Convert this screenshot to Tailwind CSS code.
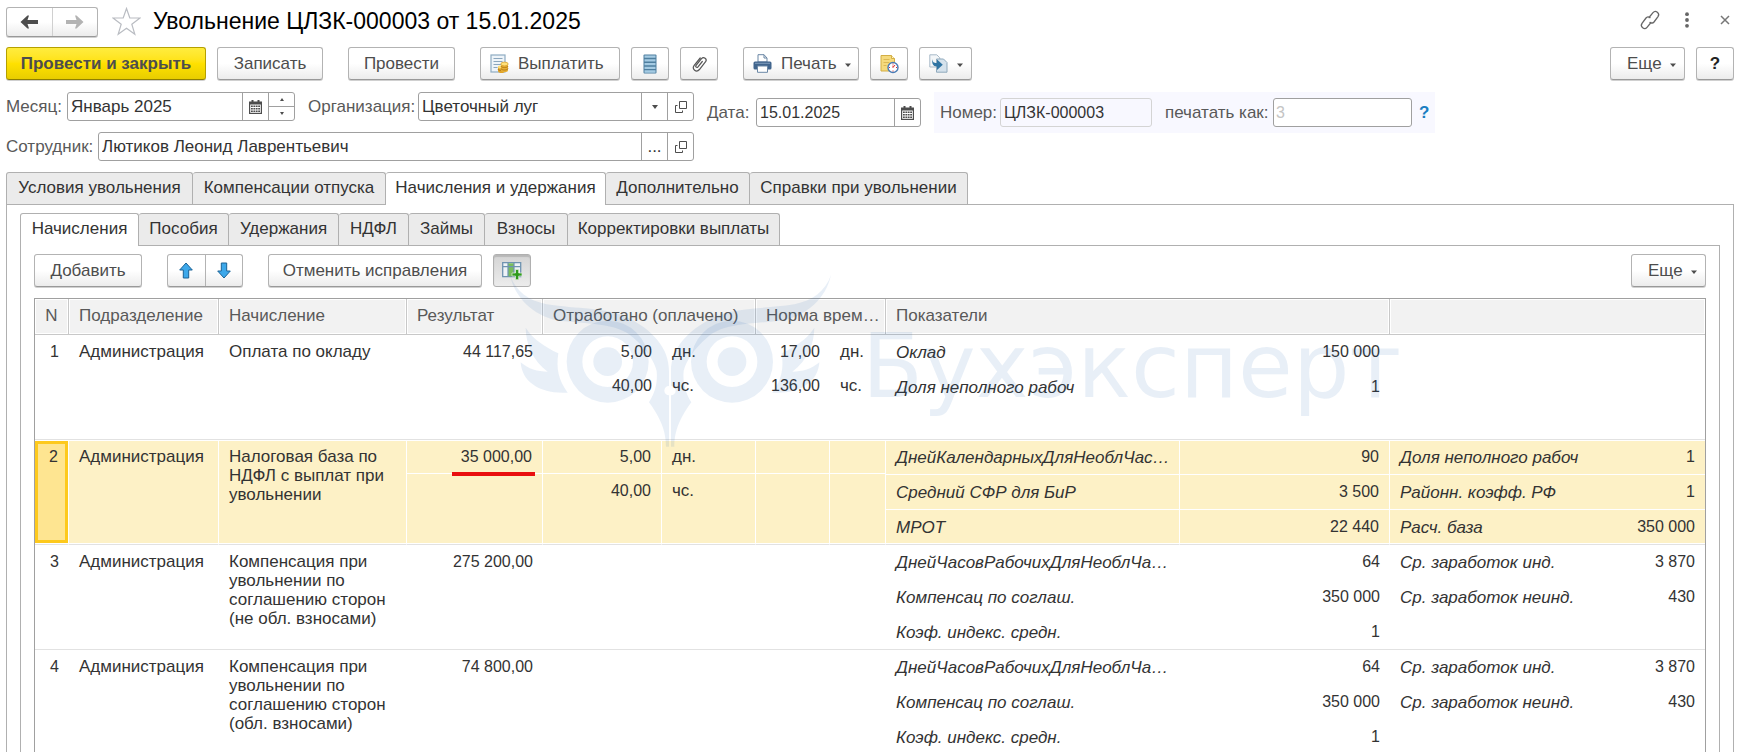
<!DOCTYPE html>
<html lang="ru">
<head>
  <meta charset="UTF-8" />
  <meta name="viewport" content="width=device-width, initial-scale=1.0"/>
  <title>Увольнение ЦЛЗК-000003 от 15.01.2025</title>
  <!-- Tailwind CSS -->
  <script src="https://cdn.jsdelivr.net/npm/@tailwindcss/browser@4"></script>
</head>
<body class="bg-white font-['Liberation_Sans',Arial,sans-serif] text-[17px] leading-[19px] text-[#333]">
<div class="relative flex h-screen flex-col overflow-hidden pl-[6px] pt-[6px]">

  <!-- Заголовок -->
  <header class="flex h-[31px] shrink-0 items-center pr-[6px]">
    <div class="flex h-[30px] w-[92px] rounded-[3px] border border-[#b3b3b3] border-b-[#999] bg-linear-to-b from-white from-50% to-[#ececec] shadow-[0_1px_0_#d0d0d0]">
      <button type="button" aria-label="Назад" class="flex flex-1 items-center justify-center border-r border-[#d0d0d0]">
        <svg width="18" height="14" viewBox="0 0 18 14"><path d="M7.500 0.500 0.500 7l7 6.500h1.500L7.500 9H18V5H7.500L9 .5z" fill="#4d4d4d"/></svg>
      </button>
      <button type="button" aria-label="Вперед" class="flex flex-1 items-center justify-center">
        <svg width="18" height="14" viewBox="0 0 18 14"><path d="M10.500 0.500 17.500 7l-7 6.500H9L10.500 9H0V5h10.500L9 .5z" fill="#b3b3b3"/></svg>
      </button>
    </div>
    <button type="button" aria-label="В избранное" class="ml-[14px]">
      <svg width="29" height="29" viewBox="0 0 29 29" fill="none" stroke="#b9bcc2" stroke-width="1.200"><path d="M14.500 1.500 17.800 11H28l-8.200 6.200 3 10L14.500 21.200 6.200 27.200l3-10L1 11h10.200z"/></svg>
    </button>
    <h1 class="ml-[12px] pb-[2px] text-[23px] leading-[28px] text-black">Увольнение ЦЛЗК-000003 от 15.01.2025</h1>
    <div class="ml-auto flex items-center pb-[3px]">
      <button type="button" aria-label="Ссылка">
        <svg width="22" height="22" viewBox="0 0 22 22" fill="none" stroke="#666" stroke-width="1.300" stroke-linecap="round"><path d="M10 8.500 14 3.700c2.600-3 7.300.5 5 3.900l-4 5.400c-1.100 1.400-2.900 1.400-4 .4M12 13.500l-4 4.800c-2.600 3-7.300-.5-5-3.900L7 9c1.100-1.400 2.900-1.400 4-.4"/></svg>
      </button>
      <button type="button" aria-label="Меню" class="ml-[23px]">
        <svg width="6" height="16" viewBox="0 0 6 16" fill="#666"><circle cx="3" cy="2.200" r="1.900"/><circle cx="3" cy="8" r="1.900"/><circle cx="3" cy="13.800" r="1.900"/></svg>
      </button>
      <button type="button" aria-label="Закрыть" class="ml-[30px] mr-[3px]">
        <svg width="10" height="10" viewBox="0 0 10 10" stroke="#777" stroke-width="1.500"><path d="M1 1l8 8M9 1 1 9"/></svg>
      </button>
    </div>
  </header>

  <!-- Командная панель -->
  <div class="mt-[10px] flex h-[33px] shrink-0 pr-[5px] text-[#4d4d4d]">
    <button type="button" class="w-[200px] rounded-[3px] border border-[#b5a000] border-b-[#8f7e00] bg-linear-to-b from-[#ffec3d] via-[#ffe100] to-[#e8cd00] font-bold shadow-[0_1px_0_#cfcfcf]">Провести и закрыть</button>
    <button type="button" class="ml-[11px] w-[106px] rounded-[3px] border border-[#b3b3b3] border-b-[#999] bg-linear-to-b from-white from-50% to-[#ececec] shadow-[0_1px_0_#d0d0d0]">Записать</button>
    <button type="button" class="ml-[25px] w-[107px] rounded-[3px] border border-[#b3b3b3] border-b-[#999] bg-linear-to-b from-white from-50% to-[#ececec] shadow-[0_1px_0_#d0d0d0]">Провести</button>
    <button type="button" class="ml-[25px] flex w-[140px] items-center gap-[9px] rounded-[3px] border border-[#b3b3b3] border-b-[#999] bg-linear-to-b from-white from-50% to-[#ececec] pl-[9px] shadow-[0_1px_0_#d0d0d0]">
      <svg width="19" height="20" viewBox="0 0 19 20"><rect x="1" y="1" width="14" height="17" fill="#eef4f9" stroke="#8eabc2" stroke-width="1.200"/><path d="M3.500 4.500h9M3.500 7.500h9M3.500 10.500h9M3.500 13.500h4" stroke="#8ba6bd"/><path d="M8 12.500v4.500c0 2.800 7 2.800 7 0v-4.500z" fill="#e0a32a"/><path d="M8 15c0 2 7 2 7 0" stroke="#b47a18" fill="none"/><ellipse cx="11.500" cy="13" rx="3.500" ry="1.700" fill="#ffe07a"/><path d="M11 10v6.500c0 2 7 2 7 0V10z" fill="#e8b035"/><path d="M11 12c0 2 7 2 7 0M11 14.500c0 2 7 2 7 0" stroke="#b47a18" fill="none"/><ellipse cx="14.500" cy="10" rx="3.700" ry="1.900" fill="#ffe07a" stroke="#d29b27" stroke-width=".7"/></svg>
      Выплатить
    </button>
    <button type="button" aria-label="Реестр" class="ml-[11px] flex w-[38px] items-center justify-center rounded-[3px] border border-[#b3b3b3] border-b-[#999] bg-linear-to-b from-white from-50% to-[#ececec] shadow-[0_1px_0_#d0d0d0]">
      <svg width="14" height="20" viewBox="0 0 14 20"><rect x=".5" y=".5" width="13" height="19" rx="1" fill="#4f7f9f"/><path d="M1.500 2.700h11M1.500 6.400h11M1.500 10.100h11M1.500 13.800h11M1.500 17.500h11" stroke="#a5cbe3" stroke-width="2.300"/></svg>
    </button>
    <button type="button" aria-label="Файлы" class="ml-[11px] flex w-[38px] items-center justify-center rounded-[3px] border border-[#b3b3b3] border-b-[#999] bg-linear-to-b from-white from-50% to-[#ececec] shadow-[0_1px_0_#d0d0d0]">
      <svg width="18" height="18" viewBox="0 0 18 18" fill="none" stroke="#555" stroke-width="1.200" stroke-linecap="round"><path d="M12.300 6.500 8 11.800c-1.200 1.400-3 0-1.900-1.500l5.400-6.600c2.200-2.600 6 .3 4.100 3L9.400 14.500c-3 3.600-8-.2-5.200-4.200l6-7.300"/></svg>
    </button>
    <button type="button" class="ml-[25px] flex w-[116px] items-center rounded-[3px] border border-[#b3b3b3] border-b-[#999] bg-linear-to-b from-white from-50% to-[#ececec] pl-[9px] shadow-[0_1px_0_#d0d0d0]">
      <svg width="19" height="19" viewBox="0 0 19 19"><path d="M5 8V.7h6L14 4v4z" fill="#fff" stroke="#6b87a5"/><path d="M11 .7V4h3" fill="none" stroke="#6b87a5"/><rect x=".5" y="7.500" width="18" height="8" rx="1.500" fill="#41658d"/><path d="M2 9.300h15" stroke="#7f9dbd"/><path d="M4.500 12h10v6.300h-10z" fill="#fff" stroke="#6b87a5"/></svg>
      <span class="ml-[9px]">Печать</span>
      <svg class="ml-[8px] mt-[2px]" width="6" height="4" viewBox="0 0 6 4"><path d="M0 .5h6L3 4z" fill="#4d4d4d"/></svg>
    </button>
    <button type="button" aria-label="Задачи" class="ml-[11px] flex w-[38px] items-center justify-center rounded-[3px] border border-[#b3b3b3] border-b-[#999] bg-linear-to-b from-white from-50% to-[#ececec] shadow-[0_1px_0_#d0d0d0]">
      <svg width="19" height="20" viewBox="0 0 19 20"><path d="M1 1.500h10.500l3 3V17H1z" fill="#f5da7d" stroke="#d3ae45"/><path d="M11.500 1.500v3h3" fill="#fff3c4" stroke="#d3ae45"/><path d="M3.500 5.500h6M3.500 8.500h6M3.500 11.500h3" stroke="#dcb954"/><circle cx="13" cy="13.500" r="5" fill="#fff" stroke="#4a7cb5" stroke-width="1.400"/><path d="M13 9.500v1M13 16.500v1M9 13.500h1M16 13.500h1" stroke="#c33"/><path d="M13 13.500 15 11M13 13.500v-2" stroke="#d33"/></svg>
    </button>
    <button type="button" aria-label="Создать на основании" class="ml-[11px] flex w-[53px] items-center rounded-[3px] border border-[#b3b3b3] border-b-[#999] bg-linear-to-b from-white from-50% to-[#ececec] pl-[9px] shadow-[0_1px_0_#d0d0d0]">
      <svg width="19" height="19" viewBox="0 0 19 19"><path d="M.8.800h7l3 3V13H.800z" fill="#f3f6f8" stroke="#a9bac8"/><path d="M7.500 5h7l3.500 3.500v9.700H7.500z" fill="#d5e2ec" stroke="#8fa9bc"/><path d="M3.500 5c0 3 1 4 4.500 4V5.500l5.800 5.300L8 16v-3.500C4 12.500 2.500 9 3.500 5z" fill="#2f74a3"/></svg>
      <svg class="ml-[9px] mt-[2px]" width="6" height="4" viewBox="0 0 6 4"><path d="M0 .5h6L3 4z" fill="#4d4d4d"/></svg>
    </button>
    <button type="button" class="ml-auto flex w-[75px] items-center rounded-[3px] border border-[#b3b3b3] border-b-[#999] bg-linear-to-b from-white from-50% to-[#ececec] pl-[16px] shadow-[0_1px_0_#d0d0d0]">
      Еще
      <svg class="ml-[8px] mt-[2px]" width="6" height="4" viewBox="0 0 6 4"><path d="M0 .5h6L3 4z" fill="#4d4d4d"/></svg>
    </button>
    <button type="button" class="ml-[11px] w-[38px] rounded-[3px] border border-[#b3b3b3] border-b-[#999] bg-linear-to-b from-white from-50% to-[#ececec] font-bold text-[#222] shadow-[0_1px_0_#d0d0d0]">?</button>
  </div>

  <!-- Реквизиты документа -->
  <form class="mt-[12px] flex shrink-0">
    <div class="flex flex-col gap-[11px]">
      <div class="flex items-center">
        <label for="month" class="w-[61px] text-[#595959]">Месяц:</label>
        <div class="flex h-[29px] w-[228px] rounded-[3px] border border-[#a0a0a0]">
          <input id="month" type="text" value="Январь 2025" class="w-0 flex-1 px-[3px] outline-none">
          <button type="button" aria-label="Календарь" class="flex w-[26px] items-center justify-center border-l border-[#a0a0a0]">
            <svg width="13" height="14" viewBox="0 0 13 14"><path d="M2.500 0h2v1.500h4V0h2v1.500H13V14H0V1.500h2.500z" fill="#4d4d4d"/><path d="M1.200 4.500h10.600v8.300H1.200z" fill="#fff"/><path d="M2 6.300h9M2 8.800h9M2 11.300h9" stroke="#4d4d4d" stroke-width="1.500" stroke-dasharray="1.800 0.600"/></svg>
          </button>
          <div class="flex w-[26px] flex-col border-l border-[#a0a0a0]">
            <button type="button" aria-label="Больше" class="flex flex-1 items-center justify-center border-b border-[#a0a0a0]"><svg width="4" height="3" viewBox="0 0 4 3"><path d="M0 3h4L2 0z" fill="#4d4d4d"/></svg></button>
            <button type="button" aria-label="Меньше" class="flex flex-1 items-center justify-center"><svg width="4" height="3" viewBox="0 0 4 3"><path d="M0 0h4L2 3z" fill="#4d4d4d"/></svg></button>
          </div>
        </div>
        <label for="org" class="ml-[13px] w-[110px] text-[#595959]">Организация:</label>
        <div class="flex h-[29px] w-[276px] rounded-[3px] border border-[#a0a0a0]">
          <input id="org" type="text" value="Цветочный луг" class="w-0 flex-1 px-[3px] outline-none">
          <button type="button" aria-label="Выбрать" class="flex w-[26px] items-center justify-center border-l border-[#a0a0a0]"><svg width="6" height="4" viewBox="0 0 6 4"><path d="M0 0h6L3 4z" fill="#4d4d4d"/></svg></button>
          <button type="button" aria-label="Открыть" class="flex w-[26px] items-center justify-center border-l border-[#a0a0a0]"><svg width="12" height="12" viewBox="0 0 12 12" fill="none" stroke="#4d4d4d"><path d="M4.500.5h7v7h-7z"/><path d="M2.500 4.500h-2v7h7v-2"/></svg></button>
        </div>
      </div>
      <div class="flex items-center">
        <label for="employee" class="w-[92px] text-[#595959]">Сотрудник:</label>
        <div class="flex h-[29px] flex-1 rounded-[3px] border border-[#a0a0a0]">
          <input id="employee" type="text" value="Лютиков Леонид Лаврентьевич" class="w-0 flex-1 px-[3px] outline-none">
          <button type="button" aria-label="Выбрать" class="w-[26px] border-l border-[#a0a0a0]">...</button>
          <button type="button" aria-label="Открыть" class="flex w-[26px] items-center justify-center border-l border-[#a0a0a0]"><svg width="12" height="12" viewBox="0 0 12 12" fill="none" stroke="#4d4d4d"><path d="M4.500.5h7v7h-7z"/><path d="M2.500 4.500h-2v7h7v-2"/></svg></button>
        </div>
      </div>
    </div>
    <div class="ml-[13px] flex h-[41px] items-center">
      <label for="date" class="w-[49px] text-[#595959]">Дата:</label>
      <div class="flex h-[29px] w-[165px] rounded-[3px] border border-[#a0a0a0]">
        <input id="date" type="text" value="15.01.2025" class="w-0 flex-1 px-[3px] text-[16px] outline-none">
        <button type="button" aria-label="Календарь" class="flex w-[26px] items-center justify-center border-l border-[#a0a0a0]">
          <svg width="13" height="14" viewBox="0 0 13 14"><path d="M2.500 0h2v1.500h4V0h2v1.500H13V14H0V1.500h2.500z" fill="#4d4d4d"/><path d="M1.200 4.500h10.600v8.300H1.200z" fill="#fff"/><path d="M2 6.300h9M2 8.800h9M2 11.300h9" stroke="#4d4d4d" stroke-width="1.500" stroke-dasharray="1.800 0.600"/></svg>
        </button>
      </div>
    </div>
    <div class="ml-[13px] flex h-[41px] w-[501px] items-center bg-[#f8f8ff] pl-[6px]">
      <label for="number" class="w-[60px] text-[#595959]">Номер:</label>
      <input id="number" type="text" value="ЦЛЗК-000003" readonly class="h-[29px] w-[152px] rounded-[3px] border border-[#d4d4d4] px-[3px] text-[16px] outline-none">
      <label for="printas" class="ml-[13px] w-[108px] whitespace-nowrap text-[#595959]">печатать как:</label>
      <input id="printas" type="text" placeholder="3" class="h-[29px] w-[139px] rounded-[3px] border border-[#a0a0a0] bg-white px-[2px] text-[16px] outline-none placeholder:text-[#c4c4c4]">
      <a href="#" class="ml-[7px] font-bold text-[#1a7ec2]">?</a>
    </div>
  </form>

  <!-- Закладки -->
  <div class="mt-[11px] flex h-[33px] shrink-0">
    <button type="button" class="h-[32px] w-[187px] rounded-t-[3px] border border-b-0 border-[#b0b0b0] bg-[#ebebeb] pb-[2px]">Условия увольнения</button>
    <button type="button" class="h-[32px] w-[193px] rounded-t-[3px] border-t border-r border-[#b0b0b0] bg-[#ebebeb] pb-[2px]">Компенсации отпуска</button>
    <button type="button" class="z-10 h-[33px] w-[220px] rounded-t-[3px] border-t border-r border-[#b0b0b0] bg-white pb-[3px]">Начисления и удержания</button>
    <button type="button" class="h-[32px] w-[144px] rounded-t-[3px] border-t border-r border-[#b0b0b0] bg-[#ebebeb] pb-[2px]">Дополнительно</button>
    <button type="button" class="h-[32px] w-[218px] rounded-t-[3px] border-t border-r border-[#b0b0b0] bg-[#ebebeb] pb-[2px]">Справки при увольнении</button>
  </div>
  <div class="mr-[5px] -mt-px flex-1 border border-b-0 border-[#b0b0b0] px-[13px] pt-[8px]">
    <div class="flex h-[33px]">
      <button type="button" class="z-10 h-[33px] w-[119px] rounded-t-[3px] border border-b-0 border-[#b0b0b0] bg-white pb-[3px]">Начисления</button>
      <button type="button" class="h-[32px] w-[90px] rounded-t-[3px] border-t border-r border-[#b0b0b0] bg-[#ebebeb] pb-[2px]">Пособия</button>
      <button type="button" class="h-[32px] w-[110px] rounded-t-[3px] border-t border-r border-[#b0b0b0] bg-[#ebebeb] pb-[2px]">Удержания</button>
      <button type="button" class="h-[32px] w-[70px] rounded-t-[3px] border-t border-r border-[#b0b0b0] bg-[#ebebeb] pb-[2px]">НДФЛ</button>
      <button type="button" class="h-[32px] w-[76px] rounded-t-[3px] border-t border-r border-[#b0b0b0] bg-[#ebebeb] pb-[2px]">Займы</button>
      <button type="button" class="h-[32px] w-[83px] rounded-t-[3px] border-t border-r border-[#b0b0b0] bg-[#ebebeb] pb-[2px]">Взносы</button>
      <button type="button" class="h-[32px] w-[212px] rounded-t-[3px] border-t border-r border-[#b0b0b0] bg-[#ebebeb] pb-[2px]">Корректировки выплаты</button>
    </div>
    <div class="-mt-px border border-b-0 border-[#b0b0b0] px-[13px] pt-[8px]">
      <div class="flex h-[33px] text-[#4d4d4d]">
        <button type="button" class="w-[108px] rounded-[3px] border border-[#b3b3b3] border-b-[#999] bg-linear-to-b from-white from-50% to-[#ececec] shadow-[0_1px_0_#d0d0d0]">Добавить</button>
        <div class="ml-[25px] flex w-[76px] rounded-[3px] border border-[#b3b3b3] border-b-[#999] bg-linear-to-b from-white from-50% to-[#ececec] shadow-[0_1px_0_#d0d0d0]">
          <button type="button" aria-label="Вверх" class="flex flex-1 items-center justify-center border-r border-[#b3b3b3]"><svg width="14" height="17" viewBox="0 0 14 17"><path d="M7 1 13.300 8H9.700v8H4.300V8H.7z" fill="#3da8ea" stroke="#1a6296"/></svg></button>
          <button type="button" aria-label="Вниз" class="flex flex-1 items-center justify-center"><svg width="14" height="17" viewBox="0 0 14 17"><path d="M7 16 13.300 9H9.700V1H4.300v8H.7z" fill="#3da8ea" stroke="#1a6296"/></svg></button>
        </div>
        <button type="button" class="ml-[25px] w-[214px] rounded-[3px] border border-[#b3b3b3] border-b-[#999] bg-linear-to-b from-white from-50% to-[#ececec] shadow-[0_1px_0_#d0d0d0]">Отменить исправления</button>
        <button type="button" aria-label="Показать колонки" class="ml-[11px] flex w-[38px] items-center justify-center rounded-[3px] border border-[#b0b0b0] bg-linear-to-b from-[#d4d4d4] to-[#ececec] shadow-[inset_0_2px_1px_#b8b8b8]">
          <svg width="20" height="19" viewBox="0 0 20 19"><path d="M.7 1.700h18v14H.7z" fill="#eef3f7" stroke="#6f93b0" stroke-width="1.300"/><path d="M6 2.300h6v13H6z" fill="#79bd5c"/><path d="M1 5.700h17.500M6 2v13.500M12 2v13.500" stroke="#6f93b0" stroke-width="1.200"/><path d="M13.500 8.500h3.200V12H20v3h-3.300v3.700h-3.200V15H10v-3h3.500z" fill="#2f9a1d" stroke="#e6f2e0" stroke-width=".7"/></svg>
        </button>
        <button type="button" class="ml-auto flex w-[75px] items-center rounded-[3px] border border-[#b3b3b3] border-b-[#999] bg-linear-to-b from-white from-50% to-[#ececec] pl-[16px] shadow-[0_1px_0_#d0d0d0]">
          Еще
          <svg class="ml-[8px] mt-[2px]" width="6" height="4" viewBox="0 0 6 4"><path d="M0 .5h6L3 4z" fill="#4d4d4d"/></svg>
        </button>
      </div>

      <!-- Таблица начислений -->
      <table class="mt-[11px] w-full table-fixed border-separate border-spacing-0 border border-b-0 border-[#a0a0a0]">
        <colgroup>
          <col class="w-[34px]"><col class="w-[150px]"><col class="w-[188px]"><col class="w-[136px]">
          <col class="w-[119px]"><col class="w-[94px]"><col class="w-[74px]"><col class="w-[56px]">
          <col class="w-[294px]"><col class="w-[210px]"><col class="w-[210px]"><col>
        </colgroup>
        <thead>
          <tr class="h-[36px] bg-[#f2f2f2] text-left text-[#595959]">
            <th class="border-r border-b border-[#c8c8c8] p-0 pb-[2px] text-center font-normal shadow-[inset_0_0_0_1px_#fff]">N</th>
            <th class="border-r border-b border-[#c8c8c8] px-[10px] pb-[2px] font-normal shadow-[inset_0_0_0_1px_#fff]">Подразделение</th>
            <th class="border-r border-b border-[#c8c8c8] px-[10px] pb-[2px] font-normal shadow-[inset_0_0_0_1px_#fff]">Начисление</th>
            <th class="border-r border-b border-[#c8c8c8] px-[10px] pb-[2px] font-normal shadow-[inset_0_0_0_1px_#fff]">Результат</th>
            <th colspan="2" class="border-r border-b border-[#c8c8c8] px-[10px] pb-[2px] font-normal whitespace-nowrap shadow-[inset_0_0_0_1px_#fff]">Отработано (оплачено)</th>
            <th colspan="2" class="border-r border-b border-[#c8c8c8] px-[10px] pb-[2px] font-normal whitespace-nowrap shadow-[inset_0_0_0_1px_#fff]">Норма врем…</th>
            <th colspan="2" class="border-r border-b border-[#c8c8c8] px-[10px] pb-[2px] font-normal shadow-[inset_0_0_0_1px_#fff]">Показатели</th>
            <th colspan="2" class="border-b border-[#c8c8c8] px-[10px] font-normal shadow-[inset_0_0_0_1px_#fff]"></th>
          </tr>
        </thead>
        <tbody>
          <tr class="h-[105px] align-top">
            <td class="border-b border-[#e2e2e2] px-[10px] pt-[7px] text-right text-[16px]">1</td>
            <td class="border-b border-[#e2e2e2] px-[10px] pt-[7px]">Администрация</td>
            <td class="border-b border-[#e2e2e2] px-[10px] pt-[7px]">Оплата по окладу</td>
            <td class="border-b border-[#e2e2e2] px-[10px] pt-[7px] text-right text-[16px]">44 117,65</td>
            <td class="border-b border-[#e2e2e2] px-[10px] pt-[7px] text-right text-[16px]"><p>5,00</p><p class="mt-[15px]">40,00</p></td>
            <td class="border-b border-[#e2e2e2] px-[10px] pt-[7px]"><p>дн.</p><p class="mt-[15px]">чс.</p></td>
            <td class="border-b border-[#e2e2e2] px-[10px] pt-[7px] text-right text-[16px]"><p>17,00</p><p class="mt-[15px]">136,00</p></td>
            <td class="border-b border-[#e2e2e2] px-[10px] pt-[7px]"><p>дн.</p><p class="mt-[15px]">чс.</p></td>
            <td class="border-b border-[#e2e2e2] px-[10px] pt-[8px] italic"><p>Оклад</p><p class="mt-[16px]">Доля неполного рабоч</p></td>
            <td class="border-b border-[#e2e2e2] px-[10px] pt-[7px] text-right text-[16px]"><p>150 000</p><p class="mt-[16px]">1</p></td>
            <td class="border-b border-[#e2e2e2]"></td>
            <td class="border-b border-[#e2e2e2]"></td>
          </tr>
          <tr class="h-[105px] align-top">
            <td class="border-b border-[#e2e2e2] border-r border-r-white p-0 pt-px text-right text-[16px]"><div class="h-[102px] border-[3px] border-[#fdc91d] bg-[#fee591] pt-[3px] pr-[7px]">2</div></td>
            <td class="border-t border-r border-b border-white border-b-[#e2e2e2] bg-[#fdf1c6] px-[10px] pt-[6px] shadow-[inset_0_-1px_0_#fff]">Администрация</td>
            <td class="border-t border-r border-b border-white border-b-[#e2e2e2] bg-[#fdf1c6] px-[10px] pt-[6px] shadow-[inset_0_-1px_0_#fff]">Налоговая база по НДФЛ с выплат при увольнении</td>
            <td class="relative border-t border-r border-b border-white border-b-[#e2e2e2] bg-[#fdf1c6] p-0 text-right text-[16px] shadow-[inset_0_-1px_0_#fff]">
              <p class="h-[33px] border-b border-white px-[10px] pt-[6px]">35 000,00</p>
              <span class="absolute top-[31px] right-[7px] h-[4px] w-[83px] bg-[#e90f0f]"></span>
            </td>
            <td class="border-t border-r border-b border-white border-b-[#e2e2e2] bg-[#fdf1c6] p-0 text-right text-[16px] shadow-[inset_0_-1px_0_#fff]"><p class="h-[33px] border-b border-white px-[10px] pt-[6px]">5,00</p><p class="px-[10px] pt-[7px]">40,00</p></td>
            <td class="border-t border-r border-b border-white border-b-[#e2e2e2] bg-[#fdf1c6] p-0 shadow-[inset_0_-1px_0_#fff]"><p class="h-[33px] border-b border-white px-[10px] pt-[6px]">дн.</p><p class="px-[10px] pt-[7px]">чс.</p></td>
            <td class="border-t border-r border-b border-white border-b-[#e2e2e2] bg-[#fdf1c6] p-0 shadow-[inset_0_-1px_0_#fff]"><p class="h-[33px] border-b border-white"></p></td>
            <td class="border-t border-r border-b border-white border-b-[#e2e2e2] bg-[#fdf1c6] p-0 shadow-[inset_0_-1px_0_#fff]"><p class="h-[33px] border-b border-white"></p></td>
            <td class="border-t border-r border-b border-white border-b-[#e2e2e2] bg-[#fdf1c6] p-0 whitespace-nowrap italic shadow-[inset_0_-1px_0_#fff]"><p class="h-[34px] border-b border-white px-[10px] pt-[7px]">ДнейКалендарныхДляНеоблЧас…</p><p class="h-[35px] border-b border-white px-[10px] pt-[8px]">Средний СФР для БиР</p><p class="px-[10px] pt-[8px]">МРОТ</p></td>
            <td class="border-t border-r border-b border-white border-b-[#e2e2e2] bg-[#fdf1c6] p-0 text-right text-[16px] shadow-[inset_0_-1px_0_#fff]"><p class="h-[34px] border-b border-white px-[10px] pt-[6px]">90</p><p class="h-[35px] border-b border-white px-[10px] pt-[7px]">3 500</p><p class="px-[10px] pt-[7px]">22 440</p></td>
            <td class="border-t border-b border-white border-b-[#e2e2e2] bg-[#fdf1c6] p-0 whitespace-nowrap italic shadow-[inset_0_-1px_0_#fff]"><p class="h-[34px] border-b border-white px-[10px] pt-[7px]">Доля неполного рабоч</p><p class="h-[35px] border-b border-white px-[10px] pt-[8px]">Районн. коэфф. РФ</p><p class="px-[10px] pt-[8px]">Расч. база</p></td>
            <td class="border-t border-b border-white border-b-[#e2e2e2] bg-[#fdf1c6] p-0 text-right text-[16px] shadow-[inset_0_-1px_0_#fff]"><p class="h-[34px] border-b border-white px-[10px] pt-[6px]">1</p><p class="h-[35px] border-b border-white px-[10px] pt-[7px]">1</p><p class="px-[10px] pt-[7px]">350 000</p></td>
          </tr>
          <tr class="h-[105px] align-top">
            <td class="border-b border-[#e2e2e2] px-[10px] pt-[7px] text-right text-[16px]">3</td>
            <td class="border-b border-[#e2e2e2] px-[10px] pt-[7px]">Администрация</td>
            <td class="border-b border-[#e2e2e2] px-[10px] pt-[7px]">Компенсация при увольнении по соглашению сторон (не&nbsp;обл. взносами)</td>
            <td class="border-b border-[#e2e2e2] px-[10px] pt-[7px] text-right text-[16px]">275 200,00</td>
            <td colspan="4" class="border-b border-[#e2e2e2]"></td>
            <td class="border-b border-[#e2e2e2] px-[10px] pt-[8px] whitespace-nowrap italic"><p>ДнейЧасовРабочихДляНеоблЧа…</p><p class="mt-[16px]">Компенсац по соглаш.</p><p class="mt-[16px]">Коэф. индекс. средн.</p></td>
            <td class="border-b border-[#e2e2e2] px-[10px] pt-[7px] text-right text-[16px]"><p>64</p><p class="mt-[16px]">350 000</p><p class="mt-[16px]">1</p></td>
            <td class="border-b border-[#e2e2e2] px-[10px] pt-[8px] whitespace-nowrap italic"><p>Ср. заработок инд.</p><p class="mt-[16px]">Ср. заработок неинд.</p></td>
            <td class="border-b border-[#e2e2e2] px-[10px] pt-[7px] text-right text-[16px]"><p>3 870</p><p class="mt-[16px]">430</p></td>
          </tr>
          <tr class="h-[105px] align-top">
            <td class="border-b border-[#e2e2e2] px-[10px] pt-[7px] text-right text-[16px]">4</td>
            <td class="border-b border-[#e2e2e2] px-[10px] pt-[7px]">Администрация</td>
            <td class="border-b border-[#e2e2e2] px-[10px] pt-[7px]">Компенсация при увольнении по соглашению сторон (обл. взносами)</td>
            <td class="border-b border-[#e2e2e2] px-[10px] pt-[7px] text-right text-[16px]">74 800,00</td>
            <td colspan="4" class="border-b border-[#e2e2e2]"></td>
            <td class="border-b border-[#e2e2e2] px-[10px] pt-[8px] whitespace-nowrap italic"><p>ДнейЧасовРабочихДляНеоблЧа…</p><p class="mt-[16px]">Компенсац по соглаш.</p><p class="mt-[16px]">Коэф. индекс. средн.</p></td>
            <td class="border-b border-[#e2e2e2] px-[10px] pt-[7px] text-right text-[16px]"><p>64</p><p class="mt-[16px]">350 000</p><p class="mt-[16px]">1</p></td>
            <td class="border-b border-[#e2e2e2] px-[10px] pt-[8px] whitespace-nowrap italic"><p>Ср. заработок инд.</p><p class="mt-[16px]">Ср. заработок неинд.</p></td>
            <td class="border-b border-[#e2e2e2] px-[10px] pt-[7px] text-right text-[16px]"><p>3 870</p><p class="mt-[16px]">430</p></td>
          </tr>
        </tbody>
      </table>
    </div>
  </div>

  <!-- Водяной знак: сова и название -->
  <div class="pointer-events-none absolute top-[245px] left-[490px] z-20 flex items-center text-[#2060b0]/10">
    <svg width="360" height="205" viewBox="0 0 1080 615" fill="currentColor">
      <path d="M60 90C78 140 115 166 170 178C260 192 350 188 410 216C490 256 537 310 537 378V423A14 14 0 0 0 537 451V605H528C528 570 520 530 477 472C497 440 503 410 500 378C494 350 470 312 430 278C380 232 290 238 200 226C130 210 75 160 60 90Z"/>
      <path d="M1023 90C1005 140 968 166 913 178C823 192 733 188 673 216C593 256 543 310 543 378V423A14 14 0 0 1 543 451V605H553C553 570 561 530 604 472C584 440 578 410 581 378C587 350 611 312 651 278C701 232 791 238 881 226C951 210 1008 160 1023 90Z"/>
      <path fill-rule="evenodd" d="M230 350a123 123 0 1 0 246 0a123 123 0 1 0-246 0ZM277 350a76 76 0 1 0 152 0a76 76 0 1 0-152 0Z"/>
      <circle cx="353" cy="350" r="43"/>
      <path fill-rule="evenodd" d="M603 350a123 123 0 1 0 246 0a123 123 0 1 0-246 0ZM650 350a76 76 0 1 0 152 0a76 76 0 1 0-152 0Z"/>
      <circle cx="726" cy="350" r="43"/>
      <path d="M107 248C130 284 165 305 205 325C198 370 205 405 233 443C150 448 95 410 92 352C115 372 143 380 173 380C128 345 108 300 107 248Z"/>
      <path d="M973 248C950 284 915 305 875 325C882 370 875 405 847 443C930 448 985 410 988 352C965 372 937 380 907 380C952 345 972 300 973 248Z"/>
    </svg>
    <span class="ml-[12px] mt-[36px] font-['DejaVu_Sans',sans-serif] text-[89px] leading-[100px]">Бухэксперт</span>
  </div>
</div>
</body>
</html>
